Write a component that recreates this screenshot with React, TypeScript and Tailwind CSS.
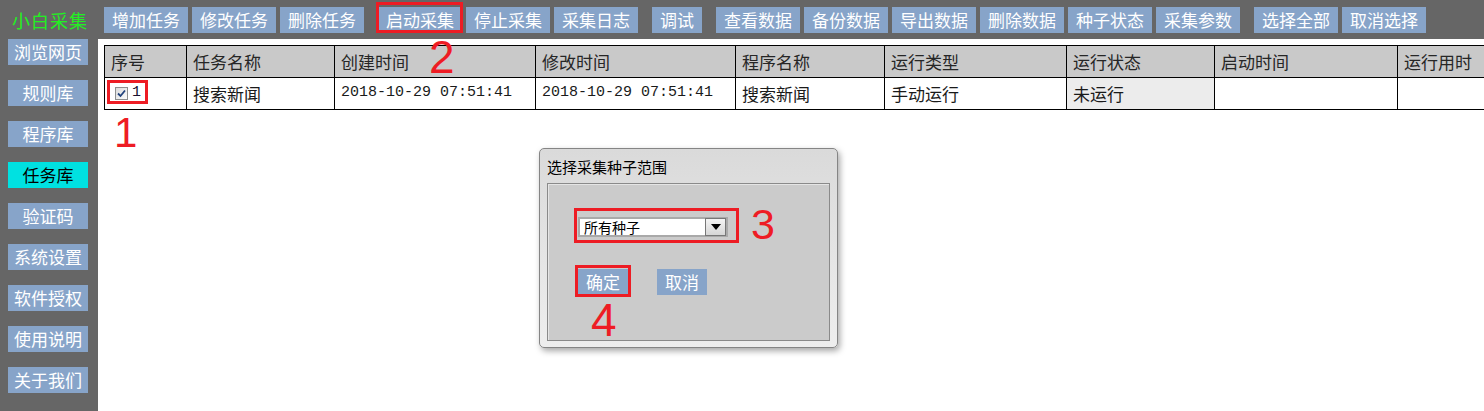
import React from "react";

const cjk = "font-['Noto_Sans_CJK_SC',sans-serif]";
const mono = "font-['Liberation_Mono','Noto_Sans_CJK_SC',monospace]";

type Btn = { label: string; w?: string; gapBefore?: boolean };

const topButtons: Btn[] = [
    { label: "增加任务" },
    { label: "修改任务" },
    { label: "删除任务" },
    { label: "启动采集", gapBefore: true },
    { label: "停止采集" },
    { label: "采集日志" },
    { label: "调试", w: "w-[50px]", gapBefore: true },
    { label: "查看数据", gapBefore: true },
    { label: "备份数据" },
    { label: "导出数据" },
    { label: "删除数据" },
    { label: "种子状态" },
    { label: "采集参数" },
    { label: "选择全部", gapBefore: true },
    { label: "取消选择" },
];

const sideButtons = ["浏览网页", "规则库", "程序库", "任务库", "验证码", "系统设置", "软件授权", "使用说明", "关于我们"];

const columns = [
    { title: "序号", w: "w-[82px]" },
    { title: "任务名称", w: "w-[148px]" },
    { title: "创建时间", w: "w-[201px]" },
    { title: "修改时间", w: "w-[200px]" },
    { title: "程序名称", w: "w-[149px]" },
    { title: "运行类型", w: "w-[182px]" },
    { title: "运行状态", w: "w-[148px]" },
    { title: "启动时间", w: "w-[183px]" },
    { title: "运行用时", w: "w-[140px]" },
];

function Checkbox() {
    return (
        <span className="inline-flex items-center justify-center w-[13px] h-[13px] border border-[#8e8f8f] bg-gradient-to-br from-[#dcdcdc] to-[#fbfbfb]">
            <svg width="9" height="9" viewBox="0 0 9 9">
                <path d="M1 4.5 L3.5 7 L8 1.5" fill="none" stroke="#21427c" strokeWidth="1.8" />
            </svg>
        </span>
    );
}

function Num({ n, className }: { n: string; className: string }) {
    return (
        <span className={`absolute leading-none text-[#ee1c24] font-['Liberation_Sans',sans-serif] ${className}`}>
            {n}
        </span>
    );
}

function RedBox({ className }: { className: string }) {
    return <div className={`absolute border-[3px] border-[#ed1c24] ${className}`} />;
}

export default function App() {
    return (
        <div className={`relative w-[1484px] h-[411px] overflow-hidden bg-[#666666] flex flex-col ${cjk}`}>
            {/* top toolbar */}
            <div className="h-[39px] flex items-center shrink-0">
                <div className="w-[98px] pl-[12px] text-[18px] leading-none tracking-[1px] text-[#22f022]">小白采集</div>
                <div className="flex items-center gap-[4px] ml-[6px]">
                    {topButtons.map((b) => (
                        <div
                            key={b.label}
                            className={`${b.w ?? "w-[84px]"} ${b.gapBefore ? "ml-[10px]" : ""} h-[26px] bg-[#87a4c9] text-white text-[17px] leading-[26px] text-center whitespace-nowrap`}
                        >
                            {b.label}
                        </div>
                    ))}
                </div>
            </div>

            <div className="flex flex-1 min-h-0">
                {/* sidebar */}
                <div className="w-[98px] shrink-0 flex flex-col gap-[15px] pl-[8px]">
                    {sideButtons.map((s) => (
                        <div
                            key={s}
                            className={`w-[80px] h-[26px] px-[6px] text-[17px] leading-[26px] text-center whitespace-nowrap ${
                                s === "任务库" ? "bg-[#00e1e1] text-black" : "bg-[#87a4c9] text-white"
                            }`}
                        >
                            {s}
                        </div>
                    ))}
                </div>

                {/* content */}
                <div className="flex-1 bg-white pl-[6px] pt-[6px] overflow-hidden">
                    <table className="table-fixed border-collapse w-[1433px] text-[17px] text-[#1a1a1a]">
                        <colgroup>
                            {columns.map((c) => (
                                <col key={c.title} className={c.w} />
                            ))}
                        </colgroup>
                        <thead>
                            <tr className="h-[32px] bg-[#c9c9c9]">
                                {columns.map((c) => (
                                    <th key={c.title} className="border border-black text-left font-normal px-[6px] text-[#262626]">
                                        {c.title}
                                    </th>
                                ))}
                            </tr>
                        </thead>
                        <tbody>
                            <tr className="h-[32px]">
                                <td className="border border-black px-[6px]">
                                    <span className="flex items-center gap-[4px] pl-[4px]">
                                        <Checkbox />
                                        <span className={`${mono} text-[15px] text-[#1a1030]`}>1</span>
                                    </span>
                                </td>
                                <td className="border border-black px-[6px]">搜索新闻</td>
                                <td className={`border border-black px-[6px] ${mono} text-[15px]`}>2018-10-29 07:51:41</td>
                                <td className={`border border-black px-[6px] ${mono} text-[15px]`}>2018-10-29 07:51:41</td>
                                <td className="border border-black px-[6px]">搜索新闻</td>
                                <td className="border border-black px-[6px]">手动运行</td>
                                <td className="border border-black px-[6px] bg-[#ececec]">未运行</td>
                                <td className="border border-black px-[6px]"></td>
                                <td className="border border-black px-[6px]"></td>
                            </tr>
                        </tbody>
                    </table>
                </div>
            </div>

            {/* dialog */}
            <div className="absolute left-[539px] top-[148px] w-[299px] h-[200px] rounded-[5px] border border-[#858585] bg-gradient-to-b from-[#dadada] to-[#eeeeee] shadow-[2px_3px_6px_rgba(0,0,0,0.35)] px-[7px] pt-[9px]">
                <div className="text-[15px] leading-[18px] text-black">选择采集种子范围</div>
                <div className="mt-[7px] h-[158px] border border-[#8a8a8a] bg-[#cbcbcb] shadow-[inset_1px_1px_0_#ffffff80] pl-[30px] pt-[33px]">
                    <div className="w-[150px] h-[20px] bg-white border-2 border-[#a9a9a9] flex items-center justify-between">
                        <span className="pl-[4px] text-[14px] leading-none text-black">所有种子</span>
                        <span className="w-[21px] h-[18px] border border-[#777] bg-gradient-to-b from-[#f4f4f4] to-[#d6d6d6] flex items-center justify-center">
                            <svg width="10" height="6" viewBox="0 0 10 6">
                                <path d="M0 0 H10 L5 6 Z" fill="#000" />
                            </svg>
                        </span>
                    </div>
                    <div className="flex gap-[29px] mt-[32px]">
                        <div className="w-[50px] h-[26px] bg-[#87a4c9] text-white text-[17px] leading-[26px] text-center">确定</div>
                        <div className="w-[50px] h-[26px] bg-[#87a4c9] text-white text-[17px] leading-[26px] text-center">取消</div>
                    </div>
                </div>
            </div>

            {/* annotations */}
            <RedBox className="left-[107px] top-[80px] w-[41px] h-[24px]" />
            <RedBox className="left-[376px] top-[2px] w-[87px] h-[31px]" />
            <RedBox className="left-[574px] top-[208px] w-[165px] h-[35px]" />
            <RedBox className="left-[575px] top-[265px] w-[56px] h-[32px]" />
            <Num n="1" className="text-[42px] left-[114px] top-[112px]" />
            <Num n="2" className="text-[46px] left-[429px] top-[34px]" />
            <Num n="3" className="text-[43px] left-[751px] top-[203px]" />
            <Num n="4" className="text-[46px] left-[591px] top-[297px]" />
        </div>
    );
}
